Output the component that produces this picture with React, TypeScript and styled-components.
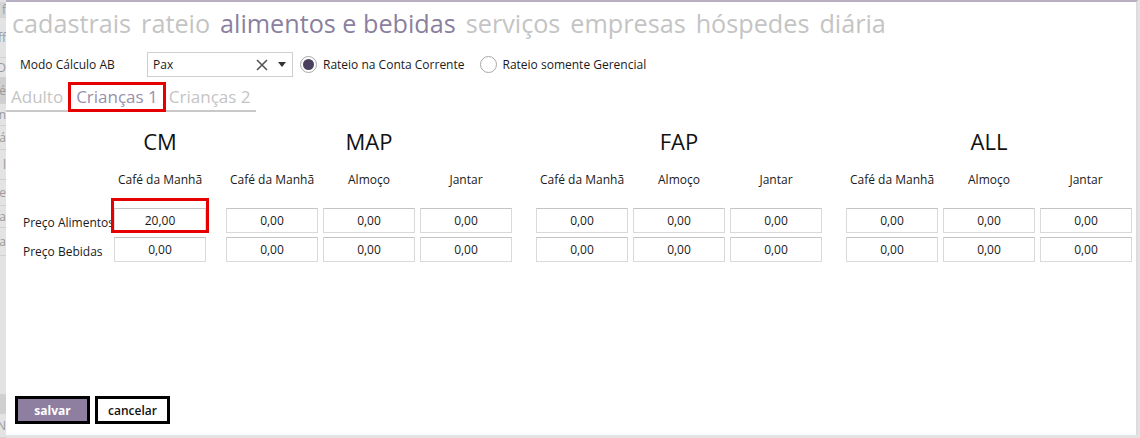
import React from "react";
import styled, { createGlobalStyle } from "styled-components";

const Global = createGlobalStyle`
  html, body { margin: 0; padding: 0; background: #e3e3e3; }
  body { font-family: "Segoe UI", "Open Sans", "Noto Sans", sans-serif; color: #1a1a1a; }
  * { box-sizing: border-box; }
`;

const Page = styled.div`
  display: flex;
  width: 1140px;
  height: 438px;
  overflow: hidden;
  background: #e3e3e3;
`;

const BackStrip = styled.div`
  width: 6px;
  display: flex;
  flex-direction: column;
  overflow: hidden;
  padding-top: 2px;
`;

const BackCell = styled.div<{ $h: number; $bg?: string }>`
  height: ${(p) => p.$h}px;
  background: ${(p) => p.$bg || "transparent"};
  font-size: 12px;
  color: #9a9a9a;
  white-space: nowrap;
  direction: rtl;
  line-height: ${(p) => p.$h}px;
  border-bottom: 1px solid #d2d2d2;
`;

const Modal = styled.div`
  width: 1132px;
  height: 435px;
  background: #fff;
  border-top: 2px solid #b8aec2;
  border-right: 2px solid #dcdcdc;
  display: flex;
  flex-direction: column;
`;

const TopTabs = styled.div`
  display: flex;
  gap: 10px;
  padding: 4px 0 0 6px;
  height: 47px;
`;

const TopTab = styled.span<{ $active?: boolean }>`
  font-size: 25.2px;
  line-height: 34px;
  color: ${(p) => (p.$active ? "#8b7fa0" : "#c4c4c4")};
`;

const FormRow = styled.div`
  display: flex;
  align-items: center;
  height: 31px;
  padding-left: 14px;
  font-size: 12px;
`;

const FieldLabel = styled.span`
  width: 127px;
`;

const Select = styled.div`
  width: 146px;
  height: 25px;
  border: 1px solid #cfcfcf;
  display: flex;
  align-items: center;
  padding-left: 5px;
  padding-right: 6px;
`;

const SelectValue = styled.span`
  flex: 1;
`;

const Radio = styled.span<{ $checked?: boolean }>`
  width: 17px;
  height: 17px;
  border-radius: 50%;
  border: 1px solid #a8a8a8;
  display: inline-flex;
  align-items: center;
  justify-content: center;
  margin-right: 6px;
  &::after {
    content: "";
    width: 11px;
    height: 11px;
    border-radius: 50%;
    background: ${(p) => (p.$checked ? "#4b3f5e" : "transparent")};
  }
`;

const RadioOption = styled.label<{ $gap: number }>`
  display: flex;
  align-items: center;
  margin-left: ${(p) => p.$gap}px;
`;

const SubTabs = styled.div`
  display: flex;
  align-items: flex-end;
  width: 250px;
  height: 32px;
  border-bottom: 2px solid #c8c8c8;
  padding-left: 2px;
  white-space: nowrap;
`;

const SubTab = styled.span<{ $active?: boolean; $boxed?: boolean }>`
  flex-shrink: 0;
  font-size: 17px;
  line-height: 24px;
  height: 30px;
  padding: 0 ${(p) => (p.$boxed ? 5 : 3)}px;
  color: ${(p) => (p.$active ? "#9a8fad" : "#c4c4c4")};
  border: 3px solid ${(p) => (p.$boxed ? "#e60000" : "transparent")};
  border-left-width: ${(p) => (p.$boxed ? 3 : 0)}px;
  border-right-width: ${(p) => (p.$boxed ? 3 : 0)}px;
  margin-bottom: -2px;
  margin-left: ${(p) => (p.$boxed ? "2px" : "0")};
`;

const Table = styled.div`
  display: flex;
  padding: 14px 0 0 16px;
`;

const LabelCol = styled.div`
  width: 92px;
  display: flex;
  flex-direction: column;
  font-size: 12px;
`;

const Group = styled.div<{ $cols: number; $ml: number }>`
  margin-left: ${(p) => p.$ml}px;
  display: grid;
  grid-template-columns: repeat(${(p) => p.$cols}, 92px);
  column-gap: 5px;
  grid-auto-rows: auto;
`;

const GroupTitle = styled.div`
  grid-column: 1 / -1;
  text-align: center;
  font-size: 22px;
  line-height: 30px;
  height: 30px;
  color: #111;
`;

const Spacer = styled.div<{ $h: number }>`
  height: ${(p) => p.$h}px;
`;

const ColHead = styled.div`
  height: 52px;
  padding-top: 15px;
  text-align: center;
  font-size: 12px;
  white-space: nowrap;
`;

const RowLabel = styled.div`
  height: 29px;
  padding-left: 1px;
  display: flex;
  align-items: center;
  white-space: nowrap;
`;

const Cell = styled.div<{ $boxed?: boolean }>`
  position: relative;
  height: 25px;
  margin-bottom: 4px;
  border: 1px solid #d9d9d9;
  border-top-color: #c4c4c4;
  display: flex;
  align-items: center;
  justify-content: center;
  font-size: 12px;
  &::after {
    content: "";
    display: ${(p) => (p.$boxed ? "block" : "none")};
    position: absolute;
    left: -4px;
    right: -4px;
    top: -11px;
    bottom: -1px;
    border: 3px solid #e60000;
  }
`;

const Footer = styled.div`
  margin-top: auto;
  display: flex;
  gap: 5px;
  padding: 0 0 11px 9px;
`;

const Button = styled.button<{ $primary?: boolean }>`
  width: 75px;
  height: 28px;
  border: 3px solid #000;
  background: ${(p) => (p.$primary ? "#8e7e9f" : "#fff")};
  color: ${(p) => (p.$primary ? "#fff" : "#111")};
  font-family: inherit;
  font-size: 12px;
  font-weight: ${(p) => (p.$primary ? 700 : 600)};
  padding: 0;
`;

type G = { title: string; cols: string[]; ml: number; values: string[][] };

const three = [
  ["0,00", "0,00", "0,00"],
  ["0,00", "0,00", "0,00"],
];
const meals = ["Café da Manhã", "Almoço", "Jantar"];

const groups: G[] = [
  { title: "CM", cols: ["Café da Manhã"], ml: 0, values: [["20,00"], ["0,00"]] },
  { title: "MAP", cols: meals, ml: 20, values: three },
  { title: "FAP", cols: meals, ml: 24, values: three },
  { title: "ALL", cols: meals, ml: 24, values: three },
];

const backRows: [number, string, string?][] = [
  [16, "f", "#d5d5d5"],
  [40, "ff"],
  [20, "D"],
  [26, "é", "#cfcfcf"],
  [22, "n"],
  [24, "cá"],
  [30, "l"],
  [26, "e"],
  [22, "fa"],
  [28, "fa"],
  [150, ""],
  [20, "", "#d0d0d0"],
  [24, "N"],
];

export default function App() {
  return (
    <Page>
      <Global />
      <BackStrip>
        {backRows.map(([h, t, bg], i) => (
          <BackCell key={i} $h={h} $bg={bg}>
            {t}
          </BackCell>
        ))}
      </BackStrip>
      <Modal>
        <TopTabs>
          <TopTab>cadastrais</TopTab>
          <TopTab>rateio</TopTab>
          <TopTab $active>alimentos e bebidas</TopTab>
          <TopTab>serviços</TopTab>
          <TopTab>empresas</TopTab>
          <TopTab>hóspedes</TopTab>
          <TopTab>diária</TopTab>
        </TopTabs>
        <FormRow>
          <FieldLabel>Modo Cálculo AB</FieldLabel>
          <Select>
            <SelectValue>Pax</SelectValue>
            <svg width="12" height="12" viewBox="0 0 12 12">
              <path d="M1 1 L11 11 M11 1 L1 11" stroke="#555" strokeWidth="1.6" />
            </svg>
            <svg width="8" height="5" viewBox="0 0 8 5" style={{ marginLeft: 10 }}>
              <path d="M0 0 L8 0 L4 5 Z" fill="#333" />
            </svg>
          </Select>
          <RadioOption $gap={7}>
            <Radio $checked />
            Rateio na Conta Corrente
          </RadioOption>
          <RadioOption $gap={15}>
            <Radio />
            Rateio somente Gerencial
          </RadioOption>
        </FormRow>
        <SubTabs>
          <SubTab>Adulto</SubTab>
          <SubTab $active $boxed>
            Crianças 1
          </SubTab>
          <SubTab>Crianças 2</SubTab>
        </SubTabs>
        <Table>
          <LabelCol>
            <Spacer $h={30} />
            <Spacer $h={52} />
            <RowLabel>Preço Alimentos</RowLabel>
            <RowLabel>Preço Bebidas</RowLabel>
          </LabelCol>
          {groups.map((g) => (
            <Group key={g.title} $cols={g.cols.length} $ml={g.ml}>
              <GroupTitle>{g.title}</GroupTitle>
              {g.cols.map((c, i) => (
                <ColHead key={i}>{c}</ColHead>
              ))}
              {g.values.flatMap((row, r) =>
                row.map((v, i) => (
                  <Cell key={`${r}-${i}`} $boxed={g.title === "CM" && r === 0}>
                    {v}
                  </Cell>
                ))
              )}
            </Group>
          ))}
        </Table>
        <Footer>
          <Button $primary>salvar</Button>
          <Button>cancelar</Button>
        </Footer>
      </Modal>
    </Page>
  );
}
